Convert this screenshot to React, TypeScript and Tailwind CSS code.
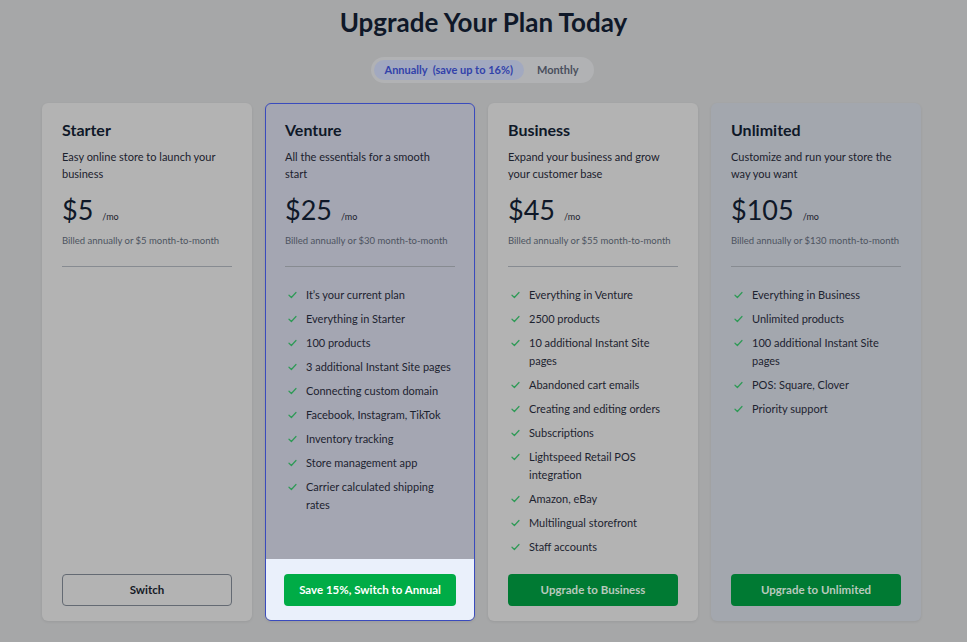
import React from 'react';

interface Plan {
  name: string;
  description: string;
  price: string;
  billed: string;
  features: string[];
  cta: string;
  variant: 'outline' | 'highlight' | 'dim';
  cardClass: string;
}

const plans: Plan[] = [
  {
    name: 'Starter',
    description: 'Easy online store to launch your business',
    price: '$5',
    billed: 'Billed annually or $5 month-to-month',
    features: [],
    cta: 'Switch',
    variant: 'outline',
    cardClass: 'bg-[#b3b3b3]',
  },
  {
    name: 'Venture',
    description: 'All the essentials for a smooth start',
    price: '$25',
    billed: 'Billed annually or $30 month-to-month',
    features: [
      'It’s your current plan',
      'Everything in Starter',
      '100 products',
      '3 additional Instant Site pages',
      'Connecting custom domain',
      'Facebook, Instagram, TikTok',
      'Inventory tracking',
      'Store management app',
      'Carrier calculated shipping rates',
    ],
    cta: 'Save 15%, Switch to Annual',
    variant: 'highlight',
    cardClass: 'bg-[#a4a6b2] border border-[#3a4bbd]',
  },
  {
    name: 'Business',
    description: 'Expand your business and grow your customer base',
    price: '$45',
    billed: 'Billed annually or $55 month-to-month',
    features: [
      'Everything in Venture',
      '2500 products',
      '10 additional Instant Site pages',
      'Abandoned cart emails',
      'Creating and editing orders',
      'Subscriptions',
      'Lightspeed Retail POS integration',
      'Amazon, eBay',
      'Multilingual storefront',
      'Staff accounts',
    ],
    cta: 'Upgrade to Business',
    variant: 'dim',
    cardClass: 'bg-[#b3b3b3]',
  },
  {
    name: 'Unlimited',
    description: 'Customize and run your store the way you want',
    price: '$105',
    billed: 'Billed annually or $130 month-to-month',
    features: [
      'Everything in Business',
      'Unlimited products',
      '100 additional Instant Site pages',
      'POS: Square, Clover',
      'Priority support',
    ],
    cta: 'Upgrade to Unlimited',
    variant: 'dim',
    cardClass: 'bg-[#a3a7ae]',
  },
];

const Check = () => (
  <svg width="9" height="8" viewBox="0 0 9 8" fill="none" className="mt-[5px] shrink-0">
    <path d="M1 4.2 3.4 6.5 8 1.5" stroke="#2e9a56" strokeWidth="1.2" strokeLinecap="round" strokeLinejoin="round" />
  </svg>
);

const PlanCard: React.FC<{ plan: Plan }> = ({ plan }) => {
  const highlight = plan.variant === 'highlight';
  const buttonClass =
    plan.variant === 'outline'
      ? 'border border-[#646a73] text-[#151a26]'
      : highlight
      ? 'bg-[#00ac46] text-white'
      : 'bg-[#007a33] text-[#b8c9bd]';

  return (
    <div className={`flex flex-col rounded-[6px] overflow-hidden shadow-[0_1px_3px_rgba(0,0,0,0.08)] ${plan.cardClass}`}>
      <div className={`flex-1 ${highlight ? 'px-[19px] pt-[15px]' : 'px-[20px] pt-[16px]'}`}>
        <h2 className="text-[16px] leading-[22px] font-bold text-[#0f1828]">{plan.name}</h2>
        <p className="mt-[7px] text-[11px] leading-[17px] text-[#1b212d] pr-2">{plan.description}</p>
        <div className="mt-[12px] flex items-baseline gap-[9px]">
          <span className="text-[27px] leading-[32px] text-[#0f1828]">{plan.price}</span>
          <span className="text-[9px] text-[#1b212d]">/mo</span>
        </div>
        <p className="mt-[8px] text-[9.5px] leading-[14px] text-[#4d535f]">{plan.billed}</p>
        <div className="mt-[18px] h-px bg-[#878b91]" />
        <ul className="mt-[19px] flex flex-col gap-[6px]">
          {plan.features.map(f => (
            <li key={f} className="flex gap-[9px] pl-[3px]">
              <Check />
              <span className="text-[11px] leading-[18px] text-[#1d2330]">{f}</span>
            </li>
          ))}
        </ul>
      </div>
      <div className={`pt-[15px] ${highlight ? 'bg-[#eaf0fb] px-[18px] pb-[14px]' : 'px-[20px] pb-[15px]'}`}>
        <button className={`w-full h-[32px] rounded-[4px] text-[11.5px] font-bold ${buttonClass}`}>{plan.cta}</button>
      </div>
    </div>
  );
};

export default function App() {
  return (
    <div
      className="min-h-[642px] w-full bg-[#a6a7a8] flex flex-col pt-[6px]"
      style={{ fontFamily: 'Lato, "Noto Sans", sans-serif' }}
    >
      <h1 className="text-center text-[26px] leading-[32px] font-bold text-[#0f1828]">Upgrade Your Plan Today</h1>
      <div className="mt-[19px] self-center -translate-x-[1px] flex items-center rounded-full bg-[#b1b2b4] p-[3px] h-[26px]">
        <button className="h-full px-[11px] rounded-full bg-[#a2a9c0] text-[11px] font-bold text-[#3242aa]">
          Annually&nbsp; (save up to 16%)
        </button>
        <button className="h-full px-[13px] rounded-full text-[11px] font-bold text-[#4a4f5c]">Monthly</button>
      </div>
      <div className="mt-[20px] ml-[42px] grid grid-cols-4 gap-[13px] w-[879px] h-[518px]">
        {plans.map(p => (
          <PlanCard key={p.name} plan={p} />
        ))}
      </div>
    </div>
  );
}
